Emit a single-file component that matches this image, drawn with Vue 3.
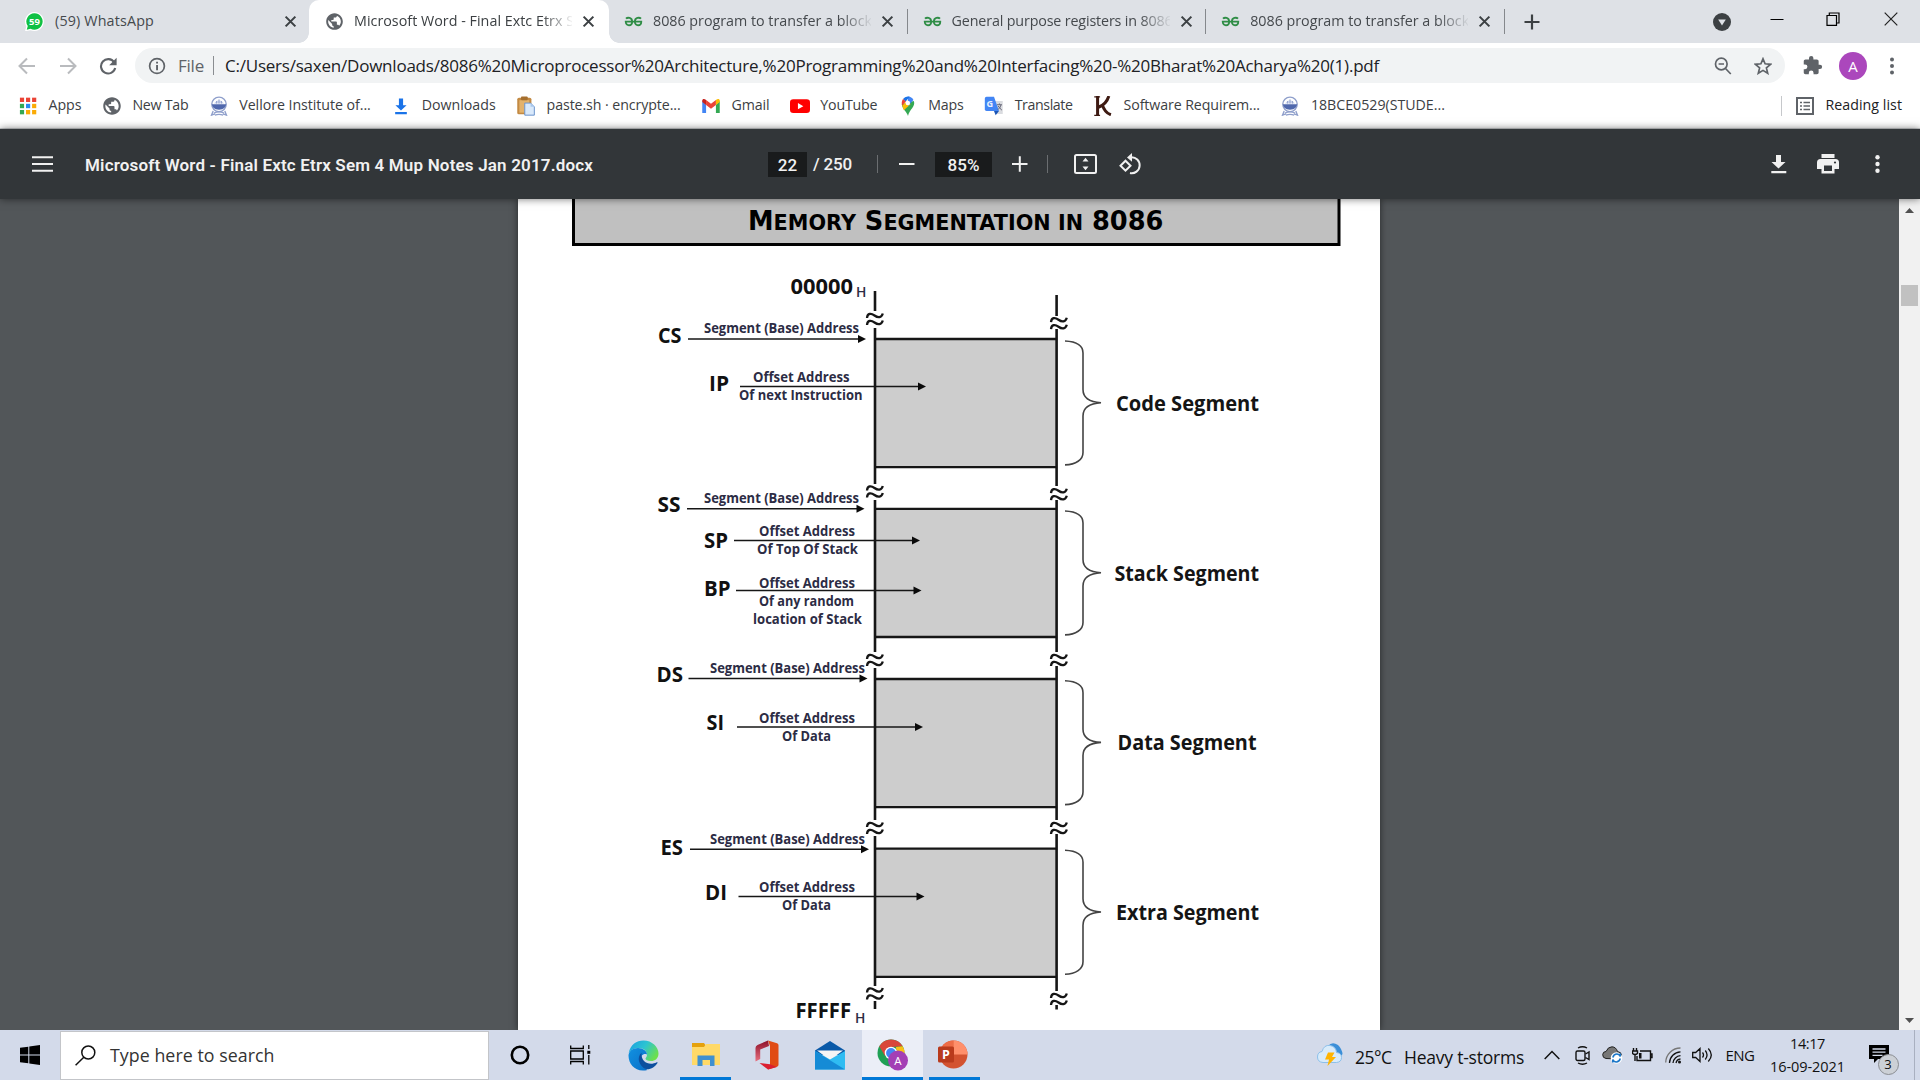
<script setup>
// Gives a label a fixed advance width by spreading the difference over its letters.
const vFit = (el, { value }) => {
  el.style.letterSpacing = '0px'
  const chars = [...el.textContent.trim()].length
  const natural = el.getBoundingClientRect().width
  el.style.letterSpacing = (value - natural) / chars + 'px'
}

const globe = '<path fill="#5f6368" d="M12 1.500C6.200 1.500 1.500 6.200 1.500 12S6.200 22.500 12 22.500 22.500 17.800 22.500 12 17.800 1.500 12 1.500zm-1 18.430c-3.950-.49-7-3.850-7-7.930 0-.62.080-1.210.210-1.790L9 15v1c0 1.100.9 2 2 2v1.930zm6.900-2.540c-.26-.81-1-1.390-1.900-1.390h-1v-3c0-.55-.45-1-1-1H8v-2h2c.55 0 1-.45 1-1V7h2c1.100 0 2-.9 2-2v-.41c2.930 1.190 5 4.060 5 7.410 0 2.080-.8 3.970-2.100 5.390z"/>'
const gfg = '<g fill="none" stroke="#2f8d46" stroke-width="2.300"><path d="M2.500 8.500C4.500 6.500 10.300 6.800 10.300 12.200C10.300 18.200 2.200 18.200 2.200 12.200H21.800C21.800 18.200 13.700 18.200 13.700 12.200C13.700 6.800 19.500 6.500 21.500 8.500"/></g>'
const whatsapp = '<path fill="#fff" d="M12 0a12 12 0 1 1-5 23L0 24.500 1.600 18A12 12 0 0 1 12 0z"/><path fill="#0fc144" d="M12 1.600A10.400 10.400 0 1 1 7 21.200l-4.800 1.300 1.300-4.700A10.400 10.400 0 0 1 12 1.600z"/><text x="12" y="16.300" text-anchor="middle" font-family="Open Sans, sans-serif" font-weight="700" font-size="12" fill="#fff">59</text>'
const crest = '<g fill="none" stroke="#8f9fcb" stroke-width="1.600"><circle cx="12" cy="10" r="8.700"/><path d="M5 18l-2 5 4-1.500M19 18l2 5-4-1.500M6 20.500q6-3 12 0M7 23q5-2 10 0" /></g><path fill="#5068ad" d="M3.500 10h17q0 6-8.500 6.500Q3.500 16 3.500 10z"/><path fill="#c9d2ec" d="M6 9q6-8 12 0z"/><path stroke="#8f9fcb" d="M12 4v5M9 6v3M15 6v3"/>'

const tabs = [
  { icon: whatsapp, title: '(59) WhatsApp', w: 99, kind: 'first' },
  { icon: globe, title: 'Microsoft Word - Final Extc Etrx S', w: 220, kind: 'active' },
  { icon: gfg, title: '8086 program to transfer a block', w: 219, kind: 'sep' },
  { icon: gfg, title: 'General purpose registers in 8086', w: 221, kind: 'sep' },
  { icon: gfg, title: '8086 program to transfer a block', w: 219, kind: 'sep' },
]

const apps = ['#ea4335', '#ea4335', '#ea4335', '#34a853', '#2b8af0', '#fbab05', '#34a853', '#fbab05', '#fbab05']
  .map((c, i) => `<rect x="${2.300 + (i % 3) * 7.300}" y="${2 + Math.floor(i / 3) * 7.400}" width="5" height="5.200" fill="${c}"/>`)
  .join('')

const bookmarks = [
  { icon: apps, title: 'Apps', w: 33 },
  { icon: globe, title: 'New Tab', w: 56 },
  { icon: crest, title: 'Vellore Institute of...', w: 131.500 },
  { icon: '<path fill="#1a73e8" d="M9.500 3h5v8h4.200L12 17.500 5.300 11h4.200zM5 19.200h14v2.600H5z"/>', title: 'Downloads', w: 74 },
  { icon: '<rect x="1.500" y="2" width="17" height="20" rx="2" fill="#c38a43"/><path fill="#e3b26c" d="M4 5h12v15H4z"/><rect x="6" y="0.500" width="8" height="4.500" rx="1" fill="#a56f2e"/><path fill="#d9e9fb" stroke="#6b94cc" stroke-width="1.200" d="M10.500 8.500h7l4.500 4.500v10h-11.500z"/><path fill="#a8c8ee" d="M17.500 8.500v4.500H22z"/>', title: 'paste.sh · encrypte...', w: 134 },
  { icon: '<path fill="#4285f4" d="M1.500 6v14.500h4.600V10.500z"/><path fill="#34a853" d="M22.500 6v14.500h-4.600V10.500z"/><path fill="#ea4335" d="M6.100 4.700L12 9.300l5.900-4.600v6L12 15.200 6.100 10.700z"/><path fill="#c5221f" d="M1.500 5.500c0-2 2.300-2.800 4.600-.8v6l-4.600-3.500z"/><path fill="#fbbc04" d="M22.500 5.500c0-2-2.300-2.800-4.600-.8v6l4.600-3.500z"/>', title: 'Gmail', w: 38 },
  { icon: '<rect x="0" y="4" width="24" height="16.500" rx="4" fill="#f00"/><path fill="#fff" d="M9.500 8.500v7.500l6.500-3.750z"/>', title: 'YouTube', w: 57 },
  { icon: '<path fill="#34a853" d="M12 24c-1-5-7-8-7.500-14.500L19 6c2.500 7-5.500 10-7 18z"/><path fill="#fbbc04" d="M5 11.500L12 5l3 5-8 7z"/><path fill="#4285f4" d="M12 .5a7.300 7.300 0 0 1 6.500 4.200L12 12z"/><path fill="#1a73e8" d="M6 3.500A7.300 7.300 0 0 1 14 .9L9 7z"/><path fill="#ea4335" d="M6 3.500L9.500 6.500l-4.500 5C4 8.500 4.500 5.500 6 3.500z"/><circle cx="11.800" cy="8.300" r="2.700" fill="#fff"/>', title: 'Maps', w: 35.500 },
  { icon: '<path fill="#dadce0" d="M9 6h13.500v15.500H14z"/><path fill="#4285f4" d="M1 3q0-2 2-2h9l6 17H3q-2 0-2-2z"/><path fill="#1a55b5" d="M12 18h6l-4 5z"/><text x="3" y="13.500" font-family="Open Sans, sans-serif" font-size="11" font-weight="700" fill="#e8f0fe">G</text><path fill="none" stroke="#667" stroke-width="1.200" d="M15.500 10.500h6M18.500 9v1.500M20.500 10.500q-1 4-4 6M17 12q2 3 4.500 5"/>', title: 'Translate', w: 58 },
  { icon: '<path fill="none" stroke="#3e1a12" stroke-width="3.600" d="M5.500 0v23.500M19 0Q16 10 6.500 13.500M11 10Q14 20 21.500 22.500"/><path stroke="#3e1a12" stroke-width="1.500" d="M1.500 1h7M1.500 23.300h7"/>', title: 'Software Requirem...', w: 136.500 },
  { icon: crest, title: '18BCE0529(STUDE...', w: 134 },
]

// Memory map, in screen coordinates.
const boxes = [339, 508.800, 679, 848.700]
const braces = [
  { y: 341, label: 'Code Segment', x: 1116, w: 143, base: 410.800 },
  { y: 511, label: 'Stack Segment', x: 1114.500, w: 144.500, base: 580.500 },
  { y: 680.700, label: 'Data Segment', x: 1117.500, w: 139, base: 750 },
  { y: 850.300, label: 'Extra Segment', x: 1116, w: 143, base: 919.800 },
]
const rails = [
  { x: 875, runs: [[291, 311], [328, 484], [500, 652], [668, 820], [836, 986], [1001, 1009]] },
  { x: 1056.600, runs: [[295, 316], [329, 486], [500, 652], [666, 820], [834, 991], [1005, 1009.500]] },
]
const breaks = [
  [875, 319.500], [875, 492], [875, 660.500], [875, 828.500], [875, 994],
  [1059, 323.700], [1059, 494.700], [1059, 660.500], [1059, 828.500], [1059, 999.500],
]
const arrows = [
  [688, 866, 339], [740, 926, 386.500], [687, 864.500, 508.800], [734, 920, 540.600], [736, 921.500, 590.600],
  [688.500, 867.500, 678.500], [737, 923, 727], [690, 869, 849.300], [738.500, 924.500, 896.500],
]
const regs = [
  ['CS', 658, 23.500, 342.700], ['IP', 709, 20, 391.300], ['SS', 657.500, 23, 512], ['SP', 704, 24, 548], ['BP', 704, 26.500, 595.500],
  ['DS', 656.500, 26.500, 681.700], ['SI', 706.500, 17.500, 730.200], ['ES', 660.500, 22.500, 854.600], ['DI', 705, 22, 900.200],
  ['00000', 790.500, 62.500, 293.500], ['FFFFF', 795.500, 55.500, 1017.500],
]
const notes = [
  ['Segment (Base) Address', 704, 155, 333.300], ['Offset Address', 753, 96.500, 381.800], ['Of next Instruction', 739, 123.500, 400],
  ['Segment (Base) Address', 704, 155, 502.700], ['Offset Address', 759, 96, 536], ['Of Top Of Stack', 757, 101, 554.300],
  ['Offset Address', 759, 96, 587.500], ['Of any random', 759, 95, 605.500], ['location of Stack', 753, 109, 623.500],
  ['Segment (Base) Address', 710, 155, 672.500], ['Offset Address', 759, 96, 722.500], ['Of Data', 782, 49, 740.500],
  ['Segment (Base) Address', 710, 155, 843.500], ['Offset Address', 759, 96, 892], ['Of Data', 782, 49, 910],
]
</script>

<template>
  <div class="screen">
    <header class="tabs">
      <div v-for="(t, i) in tabs" :key="i" class="tab" :class="t.kind">
        <svg class="fav" viewBox="0 0 24 24" v-html="t.icon" />
        <div class="tab-title" :class="{ fade: i }"><span v-fit="t.w">{{ t.title }}</span></div>
        <svg class="close" viewBox="0 0 12 12"><path d="M1.500 1.500l9 9M10.500 1.500l-9 9" /></svg>
      </div>
      <svg class="plus" viewBox="0 0 16 16"><path d="M8 .5v15M.5 8h15" /></svg>
      <div class="win">
        <svg width="18" height="18" viewBox="0 0 18 18"><circle cx="9" cy="9" r="9" fill="#3c4043" /><path d="M5.200 6.500h7.600L9 12.600z" fill="#dee1e6" /></svg>
        <svg class="min" width="14" height="14" viewBox="0 0 14 14"><path d="M.5 7.500h13" stroke="#000" /></svg>
        <svg class="max" width="14" height="14" viewBox="0 0 14 14" fill="none" stroke="#000" stroke-width="1.200"><path d="M1 3.500h9.500v9.800H1zM3.300 3.500V1h9.700v10h-2.500" /></svg>
        <svg class="x" width="14" height="14" viewBox="0 0 14 14"><path d="M.7.7l12.600 12.600M13.300.7L.7 13.300" stroke="#222" stroke-width="1.200" /></svg>
      </div>
    </header>

    <div class="toolbar">
      <div class="nav">
        <svg width="18" height="18" viewBox="0 0 18 18" class="dim"><path d="M17 9H2M9 1.500L1.500 9 9 16.500" /></svg>
        <svg width="18" height="18" viewBox="0 0 18 18" class="dim"><path d="M1 9h15M9 1.500L16.500 9 9 16.500" /></svg>
        <svg width="18" height="18" viewBox="0 0 18 18"><path d="M15.200 5.300A7.200 7.200 0 1 0 16.200 11" fill="none" stroke="#5f6368" stroke-width="2.100" /><path d="M17.600.8v7.400h-7.400z" fill="#5f6368" /></svg>
      </div>
      <div class="omnibox">
        <svg width="18" height="18" viewBox="0 0 18 18"><circle cx="9" cy="9" r="7.400" fill="none" stroke="#5f6368" stroke-width="1.700" /><path d="M8.100 4.700h1.900v1.900H8.100zM8.100 8h1.900v5.300H8.100z" fill="#5f6368" /></svg>
        <span class="scheme" v-fit="26">File</span>
        <i class="bar" />
        <span class="url" v-fit="1154">C:/Users/saxen/Downloads/8086%20Microprocessor%20Architecture,%20Programming%20and%20Interfacing%20-%20Bharat%20Acharya%20(1).pdf</span>
        <svg class="zoomout" width="18" height="18" viewBox="0 0 18 18" fill="none" stroke="#5f6368" stroke-width="1.700"><circle cx="7.300" cy="7" r="5.800" /><path d="M11.500 11.500l5.300 5.500M4.600 7h5.400" /></svg>
        <svg width="18" height="18" viewBox="0 0 18 18" fill="none" stroke="#5f6368" stroke-width="1.700"><path d="M9 1.800l2.100 5 5.500.5-4.200 3.600 1.300 5.400L9 13.400l-4.700 2.900 1.300-5.400L1.400 7.300l5.500-.5z" /></svg>
      </div>
      <svg class="puzzle" width="21" height="21" viewBox="0 0 24 24"><path fill="#5f6368" d="M20.500 11H19V7c0-1.100-.9-2-2-2h-4V3.500a2.500 2.500 0 0 0-5 0V5H4c-1.100 0-2 .9-2 2v3.800h1.500a2.700 2.700 0 0 1 0 5.400H2V20c0 1.100.9 2 2 2h3.800v-1.500a2.700 2.700 0 0 1 5.400 0V22H17c1.100 0 2-.9 2-2v-4h1.500a2.500 2.500 0 0 0 0-5z" /></svg>
      <span class="avatar">A</span>
      <svg class="dots" width="4" height="18" viewBox="0 0 4 18" fill="#5f6368"><circle cx="2" cy="2.500" r="2" /><circle cx="2" cy="9" r="2" /><circle cx="2" cy="15.500" r="2" /></svg>
    </div>

    <nav class="bookmarks">
      <div v-for="b in bookmarks" :key="b.title" class="bm">
        <svg viewBox="0 0 24 24" v-html="b.icon" /><span v-fit="b.w">{{ b.title }}</span>
      </div>
      <div class="reading">
        <svg width="18" height="18" viewBox="0 0 18 18" fill="none" stroke="#5f6368"><rect x="1" y="1" width="16" height="16" stroke-width="2" /><path d="M4 5.500h2M4 9h2M4 12.500h2M7.500 5.500H14M7.500 9H14M7.500 12.500H14" stroke-width="1.700" /></svg>
        <span v-fit="76.500">Reading list</span>
      </div>
    </nav>

    <div class="pdfbar">
      <svg class="menu" width="21" height="16" viewBox="0 0 21 16"><path d="M0 1.200h21M0 8h21M0 14.800h21" /></svg>
      <div class="title"><span v-fit="508">Microsoft Word - Final Extc Etrx Sem 4 Mup Notes Jan 2017.docx</span></div>
      <span class="field page">22</span>
      <span class="total" v-fit="39">/ 250</span>
      <i class="vr" />
      <svg class="minus" width="16" height="16" viewBox="0 0 16 16"><path d="M0 8h15.500" /></svg>
      <span class="field zoom"><span v-fit="32">85%</span></span>
      <svg class="add" width="16" height="16" viewBox="0 0 16 16"><path d="M0 8h15.500M7.800 .2v15.500" /></svg>
      <i class="vr two" />
      <svg class="fit" width="23" height="20" viewBox="0 0 23 20"><rect x="1" y="1" width="21" height="18" rx="1.500" fill="none" /><path fill="#f1f1f1" stroke="none" d="M11.500 3.800l3 3.800h-6zM11.500 16.200l3-3.800h-6z" /></svg>
      <svg class="rot" width="23" height="23" viewBox="0 0 23 23"><path fill="none" d="M12 4.300a8 8 0 1 1 -1 15.800M6.500 7.700l5 5-5 5-5-5z" /><path fill="#f1f1f1" stroke="none" d="M13 0v8.800L8 4.400z" /></svg>
      <div class="acts">
        <svg width="16" height="19" viewBox="0 0 16 19" fill="#f1f1f1"><path d="M5 0h5v7h4.500L7.500 13.500.5 7H5zM.3 16h15v2.300H.3z" /></svg>
        <svg width="22" height="20" viewBox="0 0 22 20" fill="#f1f1f1"><path d="M4.500 0h13v4h-13zM3.500 5h15Q22 5 22 8.500V15h-4.500v4.500h-13V15H0V8.500Q0 5 3.500 5zM7 11.500v5.500h8v-5.500z" fill-rule="evenodd" /><circle cx="18" cy="8.500" r="1.100" fill="#323639" /></svg>
        <svg width="5" height="18" viewBox="0 0 5 18" fill="#f1f1f1"><circle cx="2.500" cy="2.300" r="2.200" /><circle cx="2.500" cy="9" r="2.200" /><circle cx="2.500" cy="15.700" r="2.200" /></svg>
      </div>
    </div>

    <main class="viewer">
      <div class="sheet">
        <svg width="862" height="831" viewBox="518 199 862 831">
          <rect x="573.500" y="180" width="765.500" height="64.500" fill="#c0c0c0" stroke="#000" stroke-width="3" />
          <text class="head" x="748" y="229.500" textLength="415.500" lengthAdjust="spacingAndGlyphs">M<tspan class="sc">EMORY</tspan> S<tspan class="sc">EGMENTATION IN</tspan> 8086</text>

          <g v-for="y in boxes" :key="'b' + y">
            <rect x="875" :y="y" width="181.600" height="128.200" fill="#cdcdcd" />
            <path :d="`M875 ${y}h181.600M875 ${y + 128.200}h181.600`" stroke="#161616" stroke-width="2.300" />
          </g>
          <g stroke="#161616" stroke-width="2.600">
            <template v-for="r in rails" :key="r.x">
              <path v-for="(s, k) in r.runs" :key="k" :d="`M${r.x} ${s[0]}V${s[1]}`" />
            </template>
          </g>
          <g fill="none" stroke="#161616" stroke-width="2.300">
            <path v-for="(b, k) in breaks" :key="k" :d="`M${b[0] - 8} ${b[1] - 1.500}c.5-5 4-5 7.500-2.500s7 2.500 8.300-2M${b[0] - 8} ${b[1] + 5.500}c.5-5 4-5 7.500-2.500s7 2.500 8.300-2`" />
          </g>
          <g v-for="(a, k) in arrows" :key="'a' + k">
            <path :d="`M${a[0]} ${a[2]}H${a[1] - 5}`" stroke="#161616" stroke-width="1.500" />
            <path :d="`M${a[1]} ${a[2]}l-8-4v8z`" fill="#0a0a0a" />
          </g>
          <g v-for="b in braces" :key="b.label">
            <path fill="none" stroke="#444" stroke-width="1.600" :d="`M1065 ${b.y}c11 .5 18 4.500 18 12v36.500c0 8 7 12.500 18 13.200c-11 .7-18 5.200-18 13.200v36.500c0 7.500-7 12-18 12.500`" />
            <text class="seg" :x="b.x" :y="b.base" :textLength="b.w" lengthAdjust="spacingAndGlyphs">{{ b.label }}</text>
          </g>
          <text v-for="(r, k) in regs" :key="'r' + k" class="reg" :x="r[1]" :y="r[3]" :textLength="r[2]" lengthAdjust="spacingAndGlyphs">{{ r[0] }}</text>
          <text v-for="(n, k) in notes" :key="'n' + k" class="note" :x="n[1]" :y="n[3]" :textLength="n[2]" lengthAdjust="spacingAndGlyphs">{{ n[0] }}</text>
          <text class="note h" x="856" y="297">H</text>
          <text class="note h" x="855" y="1023">H</text>
        </svg>
      </div>
      <div class="scroll">
        <svg width="9" height="5" viewBox="0 0 9 5"><path d="M0 5h9L4.500 0z" fill="#505050" /></svg>
        <div class="thumb" />
        <svg width="9" height="5" viewBox="0 0 9 5"><path d="M0 0h9L4.500 5z" fill="#505050" /></svg>
      </div>
    </main>

    <footer class="taskbar">
      <svg class="start" width="20" height="20" viewBox="0 0 20 20"><path d="M0 2.800L8.300 1.700v7.700H0zM9.300 1.500L20 0v9.400H9.300zM0 10.400h8.300v7.900L0 17.200zM9.300 10.400H20V20L9.300 18.500z" /></svg>
      <div class="search">
        <svg width="21" height="21" viewBox="0 0 21 21" fill="none" stroke="#111" stroke-width="1.500"><circle cx="13.300" cy="7.500" r="6.500" /><path d="M8.800 12.200L.6 20.300" /></svg>
        <span v-fit="164.500">Type here to search</span>
      </div>
      <div class="pinned">
        <div class="pin p1"><svg width="20" height="20" viewBox="0 0 20 20"><circle cx="10" cy="10" r="8.200" fill="none" stroke="#000" stroke-width="2.600" /></svg></div>
        <div class="pin p2"><svg width="21" height="20" viewBox="0 0 21 20" fill="none" stroke="#000" stroke-width="1.300"><path d="M.7 .5v3h12.600v-3M.7 19.500v-3h12.600v3M.7 6h12.600v8H.7zM18.800 0v4M18.800 10v9.500" /><path d="M17.300 5.800h3v3h-3z" fill="#000" stroke="none" /></svg></div>
        <div class="pin p3">
          <svg width="31" height="31" viewBox="0 0 31 31">
            <defs>
              <linearGradient id="eg" x1="0" x2="1" y1=".1" y2=".6"><stop offset="0" stop-color="#1b9fe0" /><stop offset=".5" stop-color="#2cc4d2" /><stop offset="1" stop-color="#6de04b" /></linearGradient>
              <linearGradient id="eb" x1="0" x2="1" y1="0" y2="1"><stop offset="0" stop-color="#1191e0" /><stop offset="1" stop-color="#0a6fc8" /></linearGradient>
            </defs>
            <path fill="url(#eg)" d="M.7 13C2.500 4.500 8.500.5 15.500.5 24 .5 30.500 7 30.500 13.500c0 5-3.500 7.500-7.500 7.500-3.500 0-5.500-1.200-5.500-2.200s1.500-1.500 1.500-4C19 10.500 15 8 10.500 8 6 8 2.500 10 .7 13z" />
            <path fill="url(#eb)" d="M.5 15.500C.5 11 5 8 10 8c5 0 9 3 9 6.500-6-3-11 8 .5 15.500C8 33 .5 24.500.5 15.500z" />
            <path fill="#0d4f9e" d="M13.500 12.800c-5 4.500-3 12.700 4.500 16.500 5 .5 9-2.500 11.500-6.300.3-.8-.3-1-.8-.7-6.700 3.700-16 .5-15.200-9.500z" />
          </svg>
        </div>
        <div class="pin p4 open"><svg width="28" height="24" viewBox="0 0 28 24"><path fill="#e5a10c" d="M0 1h12l2 3-2 3H0z" /><path fill="#ffd968" d="M0 5h12l2-3h14v21H0z" /><path fill="#3f90d0" d="M5.500 24V13.500h17V24H18v-6h-7.500v6z" /></svg></div>
        <div class="pin p5">
          <svg width="24" height="30" viewBox="0 0 24 30"><defs><linearGradient id="of" x1="0" x2="0" y1="0" y2="1"><stop offset="0" stop-color="#8e1029" /><stop offset="1" stop-color="#e8707f" /></linearGradient></defs><path fill="url(#of)" d="M13 .5L2.500 5Q.5 6 .5 8v13.500l4.700-2.500V9.500L14 6z" /><path fill="#e04b14" d="M13 .5l9 2.800q1.500.5 1.500 2v19.500q0 1.500-1.500 2L13 29.500l2-5V6z" /><path fill="#db1f30" d="M4.500 23l10.500 1.200L22 27l-9 2.500z" /></svg>
        </div>
        <div class="pin p6"><svg width="30" height="29" viewBox="0 0 30 29"><path fill="#0a59a8" d="M0 9.500L15 0l15 9.500V14H0z" /><path fill="#f5f5f5" d="M2 9.500h26L15 19z" /><path fill="#2fbcf2" d="M0 10l15 8.500L30 10v18.500H0z" /><path fill="#158bd6" d="M0 10l30 18.500H0z" /></svg></div>
        <div class="pin p7 open on">
          <svg width="32" height="32" viewBox="0 0 32 32"><circle cx="14" cy="14" r="13.500" fill="#1fa055" /><path fill="#d9473a" d="M2.300 7.300a13.500 13.500 0 0 1 23.400 0L14 8l-6 9z" /><path fill="#fbc116" d="M25.700 7.300A13.500 13.500 0 0 1 13 27.500l7-10L19 8z" /><circle cx="14" cy="14" r="6.300" fill="#fff" /><circle cx="14" cy="14" r="4.900" fill="#4285f4" /><circle cx="21" cy="21.500" r="10" fill="#a33fb5" /><text x="21" y="25.700" text-anchor="middle" font-family="Open Sans, sans-serif" font-size="11.500" fill="#fff">A</text></svg>
        </div>
        <div class="pin p8 open"><svg width="30" height="29" viewBox="0 0 30 29"><circle cx="15.500" cy="14.500" r="14" fill="#d35230" /><path fill="#ed6c47" d="M15.500.5a14 14 0 0 0-14 14h14z" /><path fill="#ff8f6b" d="M15.500.5a14 14 0 0 1 14 14h-14z" /><rect y="6.500" width="16" height="16" rx="1.500" fill="#b93a1c" /><text x="8" y="19" text-anchor="middle" font-family="Open Sans, sans-serif" font-weight="700" font-size="12.500" fill="#fff">P</text></svg></div>
      </div>
      <div class="tray">
        <svg width="26" height="24" viewBox="0 0 26 24"><path fill="#3b8fd8" d="M11 3q4-5 10-1 4 4 4.500 9l-4 6-6-7z" /><path fill="#d8ebfa" stroke="#8dc0ea" d="M6 19.500Q.5 19 .5 14q0-5 4.500-5.500Q7 1.500 13 2.500q6 1 6.500 7 5 .5 5 5t-5 5z" /><path fill="#ffb400" d="M11 9.500h6.500l-2.500 4.500h4L10.500 23l1.500-6.500H8z" /></svg>
        <span class="temp" v-fit="36.500">25°C</span>
        <span class="cond" v-fit="120">Heavy t-storms</span>
        <svg class="chev" width="16" height="10" viewBox="0 0 16 10" fill="none" stroke="#111" stroke-width="1.500"><path d="M.7 9L8 1.500 15.300 9" /></svg>
        <svg class="cam" width="16" height="19" viewBox="0 0 16 19" fill="none" stroke="#111" stroke-width="1.400"><rect x="1" y="5" width="9" height="9.500" rx="1.500" /><path d="M10.500 8l3.500-2v7.500l-3.500-2M3 2q4.500-2.500 9 0M3 17q4.500 2.500 9 0" /></svg>
        <svg class="cloud" width="21" height="18" viewBox="0 0 21 18"><path fill="#777" stroke="#222" d="M4 12.500Q.5 12 .7 8.500 1 5.500 4 5.500 6 .7 10 .8q4 .2 5.500 4.700 4 .5 4 4t-3 3.500z" /><circle cx="14.500" cy="12" r="5.800" fill="#fff" /><path fill="none" stroke="#1c77c8" stroke-width="1.600" d="M10.800 11.500q1-3.500 4-3.500 2.500 0 3.500 2.500V7.500M18.300 12.500q-1 3.500-4 3.500-2.500 0-3.500-2.500v3" /></svg>
        <svg class="bat" width="21" height="14" viewBox="0 0 21 14" fill="none" stroke="#111" stroke-width="1.400"><path d="M8 3h10.500v9.500H5V8M18.500 6H20v3.500h-1.500M1.500 0v3M4.500 0v3M.5 3h5v2.500q-2.500 2-5 0zM3 7v6" /><path d="M7 5h2.500v5.500H7z" fill="#111" stroke="none" /></svg>
        <svg class="wifi" width="17" height="17" viewBox="0 0 17 17" fill="none" stroke="#111" stroke-width="1.300"><g stroke="#777"><path d="M.7 15.500A14.800 14.800 0 0 1 15.500 1" /></g><path d="M4.500 16A11.500 11.500 0 0 1 15.500 4.800M8 16A8 8 0 0 1 15.500 8.700M11 16a5 5 0 0 1 4.500-4" /><circle cx="14.500" cy="15" r="1.500" fill="#111" stroke="none" /></svg>
        <svg class="vol" width="21" height="16" viewBox="0 0 21 16" fill="none" stroke="#111" stroke-width="1.300"><path d="M.7 5.500h3L8 1.500v13L3.700 10.500h-3zM10.500 5.500q2 2.500 0 5M13.300 3.500q3.500 4.500 0 9M16.300 1.500q6 6.500 0 13" /></svg>
        <span class="lang" v-fit="29">ENG</span>
        <div class="clock"><span v-fit="35">14:17</span><span v-fit="75">16-09-2021</span></div>
        <div class="notif"><svg width="20" height="18" viewBox="0 0 20 18"><path d="M0 0h20v14H9l-4 4v-4H0z" /><path d="M3.500 4h13M3.500 7.200h13M3.500 10.400h10" stroke="#d3daea" stroke-width="1.300" /></svg><b>3</b></div>
      </div>
    </footer>
  </div>
</template>

<style>
body { overflow: hidden; }
</style>

<style scoped>
.screen { width: 1920px; height: 1080px; display: flex; flex-direction: column; overflow: hidden; font-family: "Open Sans", "Noto Sans", sans-serif; background: #fff; }
.screen * { box-sizing: border-box; }
svg { flex: none; display: block; }
span { white-space: nowrap; flex: none; }

.tabs { height: 43px; background: #dee1e6; display: flex; align-items: center; flex: none; }
.tab { width: 298.600px; height: 43px; display: flex; align-items: center; padding: 0 13.500px 0 15px; position: relative; font-size: 14.300px; color: #45494d; }
.tab.first { width: 309px; padding: 0 12.500px 0 25px; }
.tab.first .tab-title { margin-left: 11px; }
.tab.active { width: 300px; padding: 0 14px 0 16px; background: #fff; border-radius: 10px 10px 0 0; color: #3c4043; }
.tab.active::before, .tab.active::after { content: ""; position: absolute; bottom: 0; width: 10px; height: 10px; }
.tab.active::before { left: -10px; background: radial-gradient(circle at 0 0, #dee1e6 9.500px, #fff 10px); }
.tab.active::after { right: -10px; background: radial-gradient(circle at 100% 0, #dee1e6 9.500px, #fff 10px); }
.tab.sep::after { content: ""; position: absolute; right: 0; top: 9px; width: 1px; height: 25px; background: #85888c; }
.fav { width: 19px; height: 19px; }
.tab-title { flex: 1; margin-left: 10px; margin-right: 10px; overflow: hidden; line-height: 24px; height: 25px; }
.tab-title span { display: inline-block; }
.tab-title.fade { -webkit-mask-image: linear-gradient(90deg, #000 86%, transparent 101%); mask-image: linear-gradient(90deg, #000 86%, transparent 101%); }
.close { width: 13px; height: 13px; stroke: #3c4043; stroke-width: 1.900; }
.plus { width: 16px; height: 16px; margin-left: 19px; stroke: #3c4043; stroke-width: 2.200; }
.win { margin-left: auto; display: flex; align-items: center; padding-right: 22px; }
.win .min { margin: -6px 0 0 39px; }
.win .max { margin: -6px 0 0 42px; }
.win .x { margin: -6px 0 0 44px; }

.toolbar { height: 45px; display: flex; align-items: center; flex: none; }
.nav { width: 135px; padding-left: 18px; display: flex; gap: 22.500px; }
.nav svg { fill: none; }
.nav .dim { stroke: #b9bbbe; stroke-width: 2; }
.omnibox { width: 1650px; height: 35px; border-radius: 18px; background: #f1f3f4; display: flex; align-items: center; padding: 0 13px 0 13px; font-size: 17px; color: #202124; }
.scheme { margin-left: 12px; color: #5f6368; }
.bar { width: 1.500px; height: 19px; background: #8a8d91; margin: 0 11px 0 8.500px; }
.zoomout { margin: 0 22px 0 auto; }
.puzzle { margin-left: 17px; }
.avatar { width: 28px; height: 28px; border-radius: 50%; background: #ab47bc; color: #fff; font-size: 15px; line-height: 28px; text-align: center; margin-left: 16px; }
.dots { margin-left: 23px; }

.bookmarks { height: 41px; display: flex; align-items: center; flex: none; gap: 20.400px; padding: 0 18px 5px 18px; border-bottom: 1px solid #d0d2d5; font-size: 14.200px; color: #3c4043; }
.bm { display: flex; align-items: center; gap: 10.500px; }
.bm svg { width: 20px; height: 20px; }
.reading { margin-left: auto; display: flex; align-items: center; gap: 11.500px; border-left: 1px solid #c6c8cb; padding-left: 14px; height: 20px; color: #202124; }
.bm span, .reading span { line-height: 20px; margin-top: -1px; }

.pdfbar { height: 70px; background: #323639; display: flex; align-items: center; flex: none; padding-left: 32px; font-family: Roboto, sans-serif; color: #f1f1f1; font-size: 17px; font-weight: 500; position: relative; z-index: 1; box-shadow: 0 0 8px rgba(0, 0, 0, .55); }
.pdfbar svg { stroke: #f1f1f1; stroke-width: 2; }
.pdfbar .acts svg { stroke: none; }
.title { width: 715px; padding-left: 32px; padding-top: 1px; font-weight: 600; font-size: 17px; }
.title span { display: inline-block; }
.field { background: #191b1c; height: 25px; line-height: 26px; text-align: center; }
.page { width: 39px; }
.total { margin-left: 6px; }
.vr { width: 1px; height: 18px; background: #6b6e71; margin: 0 21px 0 25px; }
.zoom { width: 57px; margin: 0 20px; }
.vr.two { margin: 0 26px 0 19px; }
.rot { margin-left: 22px; }
.acts { margin-left: auto; display: flex; align-items: center; gap: 30.500px; padding-right: 40px; }
.acts svg:last-child { margin-left: 5.500px; }

.viewer { height: 831px; flex: none; background: #525659; display: flex; justify-content: space-between; padding-left: 518px; }
.sheet { width: 862px; background: #fff; box-shadow: 0 0 7px rgba(0, 0, 0, .55); }
.scroll { width: 21px; background: #f1f1f1; display: flex; flex-direction: column; align-items: center; justify-content: space-between; padding: 9px 0 7px; }
.thumb { width: 17px; height: 21px; background: #c1c1c1; margin: 72px 0 auto; }
.head { font: 700 26px "DejaVu Sans", sans-serif; }
.sc { font-size: 21px; }
.seg { font-weight: 700; font-size: 20.500px; fill: #151515; }
.reg { font-weight: 700; font-size: 21px; fill: #111; }
.note { font-weight: 700; font-size: 13.800px; fill: #2c2c44; }
.h { font-weight: 600; }

.taskbar { height: 50px; flex: none; background: #d3daea; display: flex; align-items: center; color: #111; }
.start { margin-left: 20px; }
.search { width: 429px; height: 49px; margin-left: 20px; background: #fff; border: 1px solid #c3c5c9; display: flex; align-items: center; gap: 14px; padding-left: 14px; font-size: 17.800px; color: #333; }
.pinned { display: flex; height: 50px; margin-left: 1px; }
.pin { display: flex; align-items: center; justify-content: center; height: 50px; width: 61px; }
.open { border-bottom: 3px solid #0078d7; padding-top: 1px; }
.p3 { width: 68px; margin-left: -1px; }
.p4 { width: 51px; margin-left: 3px; }
.p5 { margin-left: 5px; }
.p6 { margin-left: 2px; }
.on { background: #ebeef7; margin-left: 2px; }
.p7 { padding-top: 3px; }
.p8 { width: 51px; margin-left: 6px; padding-right: 3px; }
.p2 { width: 60px; }
.p1 { width: 60px; }
.tray { margin-left: auto; display: flex; align-items: center; height: 50px; width: 603px; font-size: 17.500px; }
.temp { margin-left: 12px; margin-top: 3px; }
.cond { margin-left: 12.500px; margin-top: 3px; }
.chev { margin-left: 20px; }
.cam { margin-left: 15px; }
.cloud { margin-left: 11px; }
.bat { margin-left: 9px; }
.wifi { margin-left: 12px; }
.vol { margin-left: 10px; }
.lang { margin-left: 12.500px; font-size: 15px; }
.clock { width: 76px; margin-left: 15px; display: flex; flex-direction: column; align-items: center; font-size: 14.500px; line-height: 23px; }
.notif { position: relative; margin-left: 23px; width: 46px; height: 50px; padding-top: 15px; border-right: 1px solid #a9b0c0; }
.notif b { position: absolute; left: 9px; top: 24px; width: 21px; height: 21px; border-radius: 50%; background: #ccd0d6; border: 1px solid #8a8d92; font-size: 13px; font-weight: 400; line-height: 19px; text-align: center; }
</style>
